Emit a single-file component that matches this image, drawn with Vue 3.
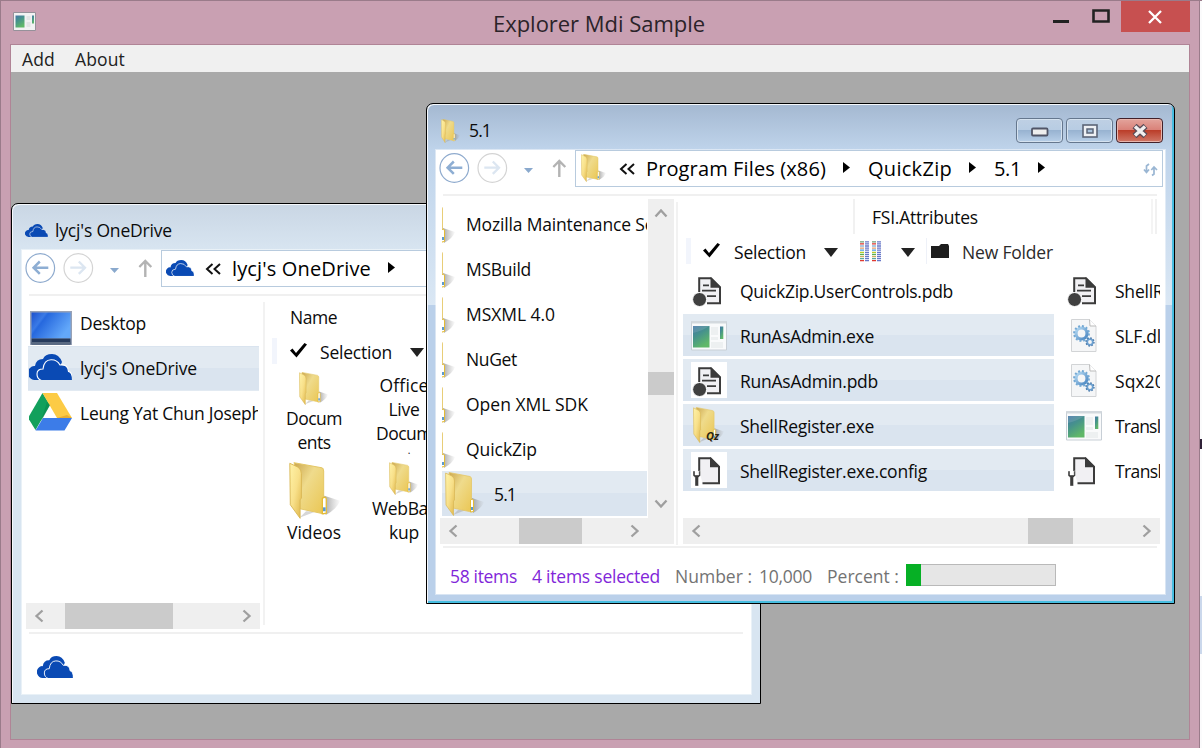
<script setup>
// Adjusts tracking so that a label takes the given width in pixels.
const vFit = {
  mounted(el, { value }) {
    if (!value) return
    const natural = el.getBoundingClientRect().width
    el.style.letterSpacing = (value - natural) / el.textContent.length + 'px'
  },
}

const windows = [
  { id: 'drive', title: "lycj's OneDrive", titleW: 117, icon: 'cloud', crumbs: [["lycj's OneDrive", 139]] },
  {
    id: 'zip', title: '5.1', titleW: 22, icon: 'folder',
    crumbs: [['Program Files (x86)', 180], ['QuickZip', 84], ['5.1', 27]],
  },
]

const places = [
  { name: 'Desktop', w: 66, icon: 'desktop' },
  { name: "lycj's OneDrive", w: 117, icon: 'cloud', selected: true },
  { name: 'Leung Yat Chun Joseph', w: 182, icon: 'gdrive' },
]

const tree = [
  { name: 'Mozilla Maintenance Service', w: 226 },
  { name: 'MSBuild', w: 65 },
  { name: 'MSXML 4.0', w: 89 },
  { name: 'NuGet', w: 51 },
  { name: 'Open XML SDK', w: 122 },
  { name: 'QuickZip', w: 71 },
  { name: '5.1', w: 22, selected: true },
]

const files = [
  { name: 'QuickZip.UserControls.pdb', w: 213, icon: 'pdb' },
  { name: 'RunAsAdmin.exe', w: 134, icon: 'exe', selected: true },
  { name: 'RunAsAdmin.pdb', w: 138, icon: 'pdb', selected: true },
  { name: 'ShellRegister.exe', w: 134, icon: 'qz', selected: true },
  { name: 'ShellRegister.exe.config', w: 187, icon: 'config', selected: true },
]

const moreFiles = [
  { name: 'ShellRegister.pdb', w: 138, icon: 'pdb' },
  { name: 'SLF.dll', w: 50, icon: 'dll' },
  { name: 'Sqx20.dll', w: 74, icon: 'dll' },
  { name: 'Translate.exe', w: 99, icon: 'exe' },
  { name: 'Translate.exe.config', w: 151, icon: 'config' },
]
const dotColors = ['#6f9f78', '#e0362c', '#8fb8d8', '#e8a06c', '#4a9be0', '#b8cc2c', '#55b050', '#c8b060', '#58a8a0', '#e03a30']
</script>

<template>
  <div class="screen">
    <svg class="defs" width="0" height="0" aria-hidden="true">
      <defs>
        <linearGradient id="gFlap" x1="0" y1="0" x2="1" y2="1"><stop offset="0" stop-color="#fff3a8" /><stop offset=".5" stop-color="#f8e08a" /><stop offset="1" stop-color="#dfb648" /></linearGradient>
        <linearGradient id="gPage" x1="0" y1="0" x2="1" y2="1"><stop offset="0" stop-color="#cba750" /><stop offset=".4" stop-color="#efdb8c" /><stop offset="1" stop-color="#eac653" /></linearGradient>
        <linearGradient id="gShade" x1="0" y1="0" x2="1" y2="0"><stop offset="0" stop-color="#8a8a8a" stop-opacity=".75" /><stop offset="1" stop-color="#aaa" stop-opacity=".05" /></linearGradient>
        <linearGradient id="gDesk" x1="0" y1="0" x2="1" y2=".5"><stop offset="0" stop-color="#1c50cc" /><stop offset=".3" stop-color="#3a7ae6" /><stop offset=".36" stop-color="#2668de" /><stop offset="1" stop-color="#63a8fa" /></linearGradient>
        <linearGradient id="gExe" x1="0" y1="0" x2=".5" y2="1"><stop offset="0" stop-color="#4576a8" /><stop offset=".45" stop-color="#46928c" /><stop offset="1" stop-color="#60b868" /></linearGradient>
        <linearGradient id="gGear" x1="0" y1="0" x2="1" y2="1"><stop offset="0" stop-color="#b8dcf4" /><stop offset="1" stop-color="#4884c0" /></linearGradient>
        <symbol id="folder" viewBox="0 0 39 44" preserveAspectRatio="none">
          <path d="M27 26 39 30Q37 36 28 41Z" fill="url(#gShade)" /><path d="M8 43l5-5 8 0Z" fill="#999" opacity=".4" />
          <path d="M4 .5 25 4.500Q26.500 5 26.500 7V40L8 36Z" fill="url(#gPage)" stroke="#e4c767" stroke-width=".8" />
          <path d="M.6 1 7 4Q9.500 6 9.500 9V28L8.500 29V43.500L1 33Z" fill="url(#gFlap)" stroke="#d8b654" stroke-width=".7" />
          <path d="M25.500 28Q28.500 26 28.500 29V39.500L25.500 40Z" fill="#fff" stroke="#e4bb35" /><path d="M26 35h2v3h-2z" fill="#5b9ad0" />
        </symbol>
        <symbol id="cloud" viewBox="0 0 44 26" preserveAspectRatio="none">
          <path d="M7 26A7 7 0 0 1 2 14Q4 11.500 7 12Q8 5 15 5Q17 0 24 0Q31 0 34 8L30 17 12 26Z" fill="#0a4ab4" />
          <path d="M14 26.700A7 7 0 0 1 9 20Q9 15 15 15Q16 6 23 5.800Q29 5.500 32 11Q40 10 40.500 17.500Q44.500 18 44.500 26.700Z" fill="#0a4ab4" stroke="#fff" stroke-width="1.100" />
        </symbol>
        <symbol id="desktop" viewBox="0 0 44 36">
          <path d="M2 1h42v35H2z" fill="#98a2b6" /><path d="M3.500 2.500h39v26h-39z" fill="url(#gDesk)" /><path d="M3.500 28.500h39v6h-39z" fill="#263a5c" /><path d="M3.500 32h39v2.500h-39z" fill="#596982" />
        </symbol>
        <symbol id="gdrive" viewBox="0 0 44 38">
          <path d="M14.500 0 22 12 7.500 37 0 25Z" fill="#12a05c" /><path d="M14.500 0H29L44 25H29Z" fill="#fccb45" /><path d="M15 25H44L36.500 37.500H7.500Z" fill="#3c7ce8" /><path d="M22 12 19 9 13 28 15 25Z" fill="#078348" opacity=".5" /><path d="m29 25 10-3 5 3Z" fill="#d99b28" opacity=".6" />
        </symbol>
        <symbol id="pdb" viewBox="0 0 36 36">
          <path d="M8.200 20V6.200H20L29 15.200V31.200H16" fill="#f1f0f3" stroke="#3b3b3b" stroke-width="2" /><path d="M19.500 5 30.200 15.700H19.500Z" fill="#3b3b3b" /><path d="M12 13.300h6M11 18.700h14M16 24.200h9" stroke="#3b3b3b" stroke-width="1.700" /><circle cx="8.600" cy="27.500" r="7" fill="#404040" stroke="#fff" stroke-width="1" />
        </symbol>
        <symbol id="config" viewBox="0 0 36 36">
          <path d="M8.200 19V6.200H19.500L28 14.700V31.200H11.500" fill="#f1f0f3" stroke="#3b3b3b" stroke-width="2" /><path d="M19 5 29.200 15.200H19Z" fill="#3b3b3b" /><path d="M2 19v4.500l2 2V34h3.500v-8.500l2-2V19H7.800v4H4V19Z" fill="#3b3b3b" stroke="#fff" stroke-width=".4" />
        </symbol>
        <symbol id="exe" viewBox="0 0 36 36">
          <path d="M.5 4.500h35v28.500h-35z" fill="#f9fafb" stroke="#c8cfd6" /><path d="M.5 4h35v2.500h-35z" fill="#d3d9de" /><path d="M2 9h16.500v21.500H2z" fill="url(#gExe)" /><path d="M2 16Q11 14 18.500 9H2Z" fill="#fff" opacity=".12" /><path d="M20 10h7v8h-7zM20 20h7v3h-7zM20 25h12v6H20z" fill="#edf0f1" /><path d="M29 9.500h3.300V22H29z" fill="url(#gExe)" />
        </symbol>
        <symbol id="dll" viewBox="0 0 36 36">
          <path d="M5.500 2.500h18l6.500 6.500v25.500H5.500z" fill="#f5f6f7" stroke="#d2d4d6" /><path d="M23.500 2.500 24 9h6" fill="#fff" stroke="#bbb" />
          <circle cx="15.500" cy="16.500" r="5.500" fill="none" stroke="url(#gGear)" stroke-width="3.200" /><circle cx="15.500" cy="16.500" r="7.400" fill="none" stroke="#74a9d4" stroke-width="2" stroke-dasharray="2 1.900" /><circle cx="24" cy="25" r="2.800" fill="none" stroke="#6ca0d0" stroke-width="1.800" /><circle cx="24" cy="25" r="4" fill="none" stroke="#4779ab" stroke-width="1.300" stroke-dasharray="1.600 1.500" />
        </symbol>
        <symbol id="qz" viewBox="0 0 36 36">
          <use href="#folder" x="2" y="0" width="31" height="36" /><text x="15" y="33" font-size="11" font-weight="bold" font-style="italic" font-family="Open Sans, sans-serif" fill="#292313">Qz</text>
        </symbol>
        <symbol id="check" viewBox="0 0 17 15"><path d="M0 7.500 2.500 5.500 6 10 14.500 0 17 1.500 6.500 14.500Z" fill="#000" /></symbol>
        <symbol id="down" viewBox="0 0 14 9"><path d="M0 0H14L7 9Z" fill="#222" /></symbol>
        <symbol id="chev" viewBox="0 0 10 14"><path d="M8.500 1.500 2.500 7l6 5.500" fill="none" stroke="#9f9f9f" stroke-width="2.300" /></symbol>
      </defs>
    </svg>

    <header class="titlebar">
      <svg class="app-icon" width="23" height="19"><path d="M.5.500h22v18H.5z" fill="#f2f2f3" stroke="#96919a" /><path d="M2.500 3.500h9v12h-9z" fill="url(#gExe)" /><path d="M19 3.500h2v8h-2z" fill="url(#gExe)" /><path d="M13.500 4h4v4h-4zM13.500 10h4v5h-4z" fill="#e2e4e5" /></svg>
      <h1><span v-fit="212">Explorer Mdi Sample</span></h1>
      <div class="sysbuttons">
        <svg width="66" height="32"><path d="M0 19h16v3H0z" fill="#222" /><path d="M40.500 9.500h15v11h-15z" fill="none" stroke="#222" stroke-width="2.600" /></svg>
        <button class="sysclose"><svg width="16" height="14"><path d="M1 1l12 12M13 1 1 13" stroke="#fff" stroke-width="2.300" /></svg></button>
      </div>
    </header>

    <div class="client">
      <nav class="menu"><span v-fit="33">Add</span><span v-fit="50">About</span></nav>
      <main class="mdi">
        <section v-for="w in windows" :key="w.id" class="win" :class="w.id">
          <div class="wintitle">
            <svg class="wicon"><use :href="'#' + w.icon" /></svg>
            <span v-fit="w.titleW">{{ w.title }}</span>
            <div v-if="w.id === 'zip'" class="winbuttons">
              <button><svg width="18" height="10"><rect x="1" y="1.500" width="15.500" height="7" rx="1" fill="#eee" stroke="#505567" stroke-width="1.800" /></svg></button>
              <button><svg width="16" height="14"><rect x="1" y="1" width="14" height="12" fill="#eef0f4" stroke="#5c6577" stroke-width="1.600" /><rect x="5" y="5" width="6" height="4" fill="#a9c2dc" stroke="#5c6577" stroke-width="1.500" /></svg></button>
              <button class="close"><svg width="20" height="14"><path d="M4.500 2l11 10M15.500 2l-11 10" stroke="#5a4b56" stroke-width="6" /><path d="M5 2.500l10 9M15 2.500l-10 9" stroke="#f2efef" stroke-width="3.400" /></svg></button>
            </div>
          </div>

          <div class="pane">
            <div class="nav">
              <svg class="circle" width="32" height="32"><circle cx="16" cy="16" r="14.300" fill="#fff" stroke="#8fabce" stroke-width="1.200" /><path d="M24 15.700H10M15.500 9.500l-6.200 6.200 6.200 6.200" fill="none" stroke="#8eaed3" stroke-width="2.500" /></svg>
              <svg class="circle" width="32" height="32"><circle cx="16" cy="16" r="14.300" fill="#fff" stroke="#d4d4d4" stroke-width="1.200" /><path d="M8 15.700H22M16.500 9.500l6.200 6.200-6.200 6.200" fill="none" stroke="#dce6f1" stroke-width="2.300" /></svg>
              <svg class="hist" width="9" height="5"><path d="M0 0h9L4.500 5Z" fill="#8aa9cd" /></svg>
              <svg class="up" width="14" height="18"><path d="M7 18V2M1 8l6-6 6 6" fill="none" stroke="#b3b3b3" stroke-width="2.400" /></svg>
              <div class="address">
                <svg class="aicon"><use :href="'#' + w.icon" /></svg>
                <svg class="laquo" width="16" height="12"><path d="M7.500 1 2 6l5.500 5M15 1 9.500 6l5.500 5" fill="none" stroke="#111" stroke-width="2" /></svg>
                <template v-for="c in w.crumbs" :key="c[0]">
                  <span v-fit="c[1]">{{ c[0] }}</span>
                  <svg class="crumb-arrow" width="7" height="11"><path d="M0 0 7 5.500 0 11Z" /></svg>
                </template>
                <svg v-if="w.id === 'zip'" class="refresh" width="15" height="15"><path d="M6 2 3.500 4V10M1 7.500 3.500 10.500 6 7.500M9 13.500 11 12V5.500M8.300 8 11 5l3 3" fill="none" stroke="#9ab6d3" stroke-width="1.700" /></svg>
              </div>
            </div>
            <div class="rule"></div>

            <div v-if="w.id === 'drive'" class="body">
              <aside class="places">
                <div v-for="p in places" :key="p.name" class="place" :class="{ selected: p.selected }">
                  <svg :class="p.icon"><use :href="'#' + p.icon" /></svg><span v-fit="p.w">{{ p.name }}</span>
                </div>
                <div class="hscroll"><svg><use href="#chev" /></svg><i></i><svg class="flip"><use href="#chev" /></svg></div>
              </aside>
              <div class="files">
                <div class="colhead"><span v-fit="47">Name</span></div>
                <div class="tools">
                  <svg class="check"><use href="#check" /></svg><span v-fit="72">Selection</span><svg class="down"><use href="#down" /></svg>
                </div>
                <div class="tiles">
                  <div class="tile"><svg class="small"><use href="#folder" /></svg><span v-fit="56">Docum</span><span v-fit="33">ents</span></div>
                  <div class="tile"><span v-fit="49">Office</span><span v-fit="31">Live</span><span v-fit="56">Docum</span><span class="more">.</span></div>
                  <div class="tile"><svg class="large"><use href="#folder" /></svg><span v-fit="54">Videos</span></div>
                  <div class="tile"><svg class="small"><use href="#folder" /></svg><span v-fit="64">WebBac</span><span v-fit="30">kup</span></div>
                </div>
              </div>
            </div>

            <div v-else class="body">
              <aside class="tree">
                <div class="treeview">
                  <div v-for="t in tree" :key="t.name" class="node" :class="{ selected: t.selected }">
                    <svg><use href="#folder" /></svg><span v-fit="t.w">{{ t.name }}</span>
                  </div>
                </div>
                <div class="vscroll"><svg class="vup"><use href="#chev" /></svg><i></i><svg class="vdown"><use href="#chev" /></svg></div>
                <div class="hscroll"><svg><use href="#chev" /></svg><i></i><svg class="flip"><use href="#chev" /></svg></div>
                <div class="corner"></div>
              </aside>
              <div class="files">
                <div class="colhead"><span v-fit="106">FSI.Attributes</span></div>
                <div class="tools">
                  <svg class="check"><use href="#check" /></svg><span v-fit="72">Selection</span><svg class="down"><use href="#down" /></svg>
                  <svg class="dots" width="21" height="21">
                    <g v-for="(c, i) in dotColors" :key="i"><path :d="`M0 ${i * 2.1 + .8}h4M12 ${i * 2.1 + .8}h4`" :stroke="c" stroke-width="1.300" /><path :d="`M5 ${i * 2.1 + .8}h4M17 ${i * 2.1 + .8}h4`" stroke="#6878c8" stroke-width="1.300" /></g>
                  </svg>
                  <svg class="down second"><use href="#down" /></svg>
                  <i class="tsep"></i>
                  <svg class="newicon" width="18" height="14"><path d="M0 2h8l2-2h7l1 2v12H0Z" fill="#1d1d1d" /></svg>
                  <span v-fit="91" class="newfolder">New Folder</span>
                </div>
                <div class="columns">
                  <div v-for="(col, k) in [files, moreFiles]" :key="k" class="column">
                    <div v-for="f in col" :key="f.name" class="file" :class="{ selected: f.selected }">
                      <svg :class="f.icon"><use :href="'#' + f.icon" /></svg><span v-fit="f.w">{{ f.name }}</span>
                    </div>
                  </div>
                </div>
                <div class="hscroll"><svg><use href="#chev" /></svg><i></i><svg class="flip"><use href="#chev" /></svg></div>
              </div>
            </div>

            <div class="rule bottom"></div>
            <footer v-if="w.id === 'drive'" class="status"><svg class="status-cloud"><use href="#cloud" /></svg></footer>
            <footer v-else class="status">
              <span v-fit="67" class="violet">58 items</span><span v-fit="128" class="violet">4 items selected</span>
              <span v-fit="77">Number :</span><span v-fit="53" class="value">10,000</span><span v-fit="72">Percent :</span>
              <div class="progress"><i></i></div>
            </footer>
          </div>
        </section>
      </main>
    </div>
    <div class="edge"><i></i><b></b></div>
  </div>
</template>

<style>
body { margin: 0; overflow: hidden; }
</style>

<style scoped>
* { box-sizing: border-box; }
.screen { position: relative; width: 1202px; height: 748px; overflow: hidden; background: #c9a0b2; border: 1px solid #9a7b8a; border-bottom: 0; border-right: 0; font: 17.500px/24px "Open Sans", "Noto Sans", sans-serif; color: #0b0b0b; }
.defs { position: absolute; }
svg { display: block; flex: none; }
span { white-space: pre; flex: none; }
button { padding: 0; border: 0; display: flex; align-items: center; justify-content: center; }
.titlebar { height: 43px; display: flex; align-items: flex-start; }
.app-icon { margin: 11px 0 0 12px; }
h1 { margin: 6px 0 0 457px; font-size: 22px; line-height: 32px; font-weight: 400; color: #2b2329; width: 560px; }
.sysbuttons { display: flex; }
.sysbuttons > svg { margin-left: 0; width: 68px; }
.sysclose { width: 69px; height: 31px; background: #c75050; }
.client { width: 1180px; height: 696px; margin-left: 9px; border: 1px solid #b08496; }
.menu { height: 27px; background: #f0f0f0; display: flex; gap: 20px; padding: 2px 0 0 11px; color: #222; }
.mdi { position: relative; height: 667px; background: #a9a9a9; overflow: hidden; }
.edge { position: absolute; right: 0; top: -1px; width: 3px; height: 748px; border-left: 1px solid #9a7b8a; background: #fbfbfc; display: flex; flex-direction: column; }
.edge i { margin-top: 439px; height: 10px; background: #302238; width: 2px; }
.edge b { margin-top: 147px; height: 58px; background: #cbd8ec; }

.win { position: absolute; border: 1px solid #000; border-radius: 7px 7px 0 0; height: 501px; padding: 0 9px 9px; }
.drive { left: 0; top: 131px; width: 750px; padding-left: 10px; background: linear-gradient(#c9d6e4, #d8e5f1 46px); box-shadow: inset 1px 1px #f6f9fc; }
.zip { left: 415px; top: 31px; width: 749px; background: linear-gradient(#a4b8d1, #bfd4eb 46px, #dae7f4 201px, #bad0ea 201px); box-shadow: inset 1px 1px #f6f9fc, inset -2px -2px #47bde0; }
.wintitle { height: 46px; display: flex; align-items: center; padding-top: 7px; }
.wintitle > span { margin-top: -2px; }
.drive .wicon { width: 23px; height: 13px; margin: -1px 7px 0 3px; }
.zip .wicon { width: 19px; height: 24px; margin: 0 9px 0 5px; }
.winbuttons { margin: 0 2px 0 auto; display: flex; gap: 3px; }
.winbuttons button { width: 47px; height: 25px; border: 1.500px solid #65778e; border-radius: 4px; background: linear-gradient(#bfd0e4, #b7cce3 49%, #98b3d1 50%, #b8cfe8); box-shadow: inset 0 0 0 1px #d5e2ef; }
.winbuttons .close { border-color: #42212a; background: linear-gradient(#e3a49c, #d98077 49%, #bb3e2a 50%, #d07868); box-shadow: inset 0 0 0 1px #e9b5ac; }
.winbuttons button svg { margin-top: 3px; }
.winbuttons button:nth-child(2) svg { margin-top: 1px; }
.winbuttons .close svg { margin-top: 1px; }
.pane { height: 444px; background: #fff; box-shadow: 0 0 0 1px rgba(255,255,255,.45); display: flex; flex-direction: column; overflow: hidden; }
.nav { height: 37px; display: flex; align-items: center; flex: none; padding: 0 0 1px 2px; }
.circle + .circle { margin-left: 6px; }
.circle, .up { transform: translateX(.3px); }
.hist { margin: 4px 0 0 16px; }
.up { margin: 0 0 0 19px; }
.address { margin-left: 9px; align-self: flex-start; width: 588px; height: 37px; border: 1px solid #b8cbde; display: flex; align-items: center; font-size: 20px; line-height: 28px; padding: 1px 4px 0 4px; color: #000; }
.drive .aicon { width: 28px; height: 16px; margin: -3px 11px 0 0; }
.zip .aicon { width: 25px; height: 28px; margin: -2px 13px 0 1px; }
.laquo { margin: -1px 11px 0 0; }
.crumb-arrow { margin: -3px 18px 0 17px; }
.refresh { margin-left: auto; }
.rule { flex: none; height: 2px; margin: 7px 8px 0 7px; background: #f0f0f0; }
.body { display: flex; flex: none; margin-top: 1px; }
.rule.bottom { margin-top: 0; }
.selected { background: linear-gradient(#e2eaf2 50%, #dae4ef 50%); }

.places { width: 239px; margin-left: 4px; padding-top: 4px; border: 0; display: flex; flex-direction: column; }
.drive .body { height: 335px; }
.place { height: 45px; width: 231px; margin-left: 2px; display: flex; align-items: center; overflow: hidden; border: 1px solid transparent; }
.place span { margin: 0 0 1px 8px; }
.place svg { width: 44px; height: 26px; margin-left: -1px; }
.place span { margin-left: 8px; }
.place .desktop { height: 36px; margin-top: 8px; }
.place .gdrive { height: 38px; margin-top: -4px; }
.place .cloud { margin-top: -3px; }
.hscroll { height: 26px; background: #efefef; display: flex; align-items: center; position: relative; padding: 0 8px; }
.hscroll svg { width: 10px; height: 14px; }
.hscroll .flip { transform: scaleX(-1); margin-left: auto; }
.hscroll i { height: 26px; background: #cbcbcb; }
.places .hscroll { margin-top: auto; margin-bottom: 3px; width: 234px; }
.places .hscroll i { margin-left: 21px; width: 108px; }
.drive .files { margin: 5px 0 7px -2px; border-left: 2px solid #f2f2f2; flex: 1; min-width: 0; }
.drive .colhead { height: 36px; padding: 3px 0 0 25px; }
.tools { height: 26px; display: flex; align-items: center; }
.drive .tools { margin-left: 7px; border-left: 5px solid #f2f5fc; padding-left: 13px; }
.check { width: 17px; height: 15px; margin-top: -1px; }
.tools span { margin: 2px 0 0 13px; }
.down { width: 14px; height: 9px; margin: 2px 0 0 18px; }
.tiles { display: grid; grid-template-columns: 90px 90px; grid-template-rows: 90px 90px; margin: 7px 0 0 4px; }
.tile { display: flex; flex-direction: column; align-items: center; height: 88px; overflow: hidden; line-height: 24px; }
.tile .small { width: 29px; height: 33px; margin: 1px 0 1px; transform: translateX(-1px); }
.tile .large { width: 51px; height: 57px; margin: 1px 0 1px; }
.tile:nth-child(2) { padding-top: 2px; }
.more { margin: 0 0 0 10px; font-size: 10px; line-height: 11px; }

.zip .body { height: 349px; }
.tree { width: 234px; margin: 2px 0 0 4px; display: grid; grid-template: 319px 26px / 208px 26px; height: 345px; }
.treeview { overflow: hidden; padding: 2px 1px 0 2px; }
.node { height: 45px; display: flex; align-items: center; overflow: hidden; width: 205px; }
.node svg { width: 39px; height: 44px; margin-left: -26px; }
.node span { margin-left: 11px; }
.node.selected svg { margin-left: 3px; }
.node.selected span { margin-left: 10px; }
.vscroll { background: #efefef; display: flex; flex-direction: column; align-items: center; padding: 7px 0; }
.vscroll svg { width: 10px; height: 14px; }
.vup { transform: rotate(90deg); }
.vdown { transform: rotate(-90deg); margin-top: auto; }
.vscroll i { margin-top: 152px; width: 26px; height: 23px; background: #cbcbcb; }
.tree .hscroll i { margin-left: 61px; width: 63px; }
.corner { background: #efefef; }
.zip .files { width: 485px; margin: 5px 0 0 2px; border-left: 2px solid #f2f2f2; padding: 0 0 0 5px; height: 343px; }
.zip .colhead { height: 35px; margin: -3px 1px 0 170px; border: 2px solid #f1f1f1; border-width: 0 2px; padding: 6px 0 0 17px; position: relative; width: 304px; box-shadow: inset -2px 0 #fff, inset -4px 0 #f4f4f4; }
.zip .tools { margin: 4px 0 0 3px; border-left: 5px solid #f2f5fc; padding-left: 12px; }
.zip .check + span { margin-left: 14px; }
.dots { margin-left: 22px; }
.down.second { margin-left: 20px; }
.tsep { width: 1px; height: 26px; background: #eef1f8; margin-left: 11px; }
.newicon { margin: 0 0 0 4px; }
.tools .newfolder { color: #2b2b2b; }
.columns { display: flex; gap: 4px; width: 477px; overflow: hidden; margin-top: 5px; height: 223px; }
.column { width: 371px; flex: none; }
.file { height: 42px; margin-bottom: 3px; display: flex; align-items: center; padding-left: 8px; }
.file > svg { width: 36px; height: 36px; }
.file.selected > .pdb, .file.selected > .config { background: #fff; }
.file span { margin: 1px 0 0 13px; }
.zip .files .hscroll { margin-top: 26px; width: 477px; }
.zip .files .hscroll i { margin-left: 327px; width: 45px; }
.status { flex: 1; display: flex; align-items: center; color: #737373; }
.zip .status { padding: 10px 0 0 14px; }
.status-cloud { width: 36px; height: 22px; margin: 5px 0 0 15px; }
.status span + span { margin-left: 15px; }
.status span.value { margin-left: 7px; }
.violet { color: #8126d9; }
.progress { width: 150px; height: 22px; border: 1px solid #b9b9b9; background: #e6e6e6; margin: -3px 0 0 7px; }
.progress i { display: block; width: 15px; height: 22px; margin: -1px; background: #06b025; }
</style>
